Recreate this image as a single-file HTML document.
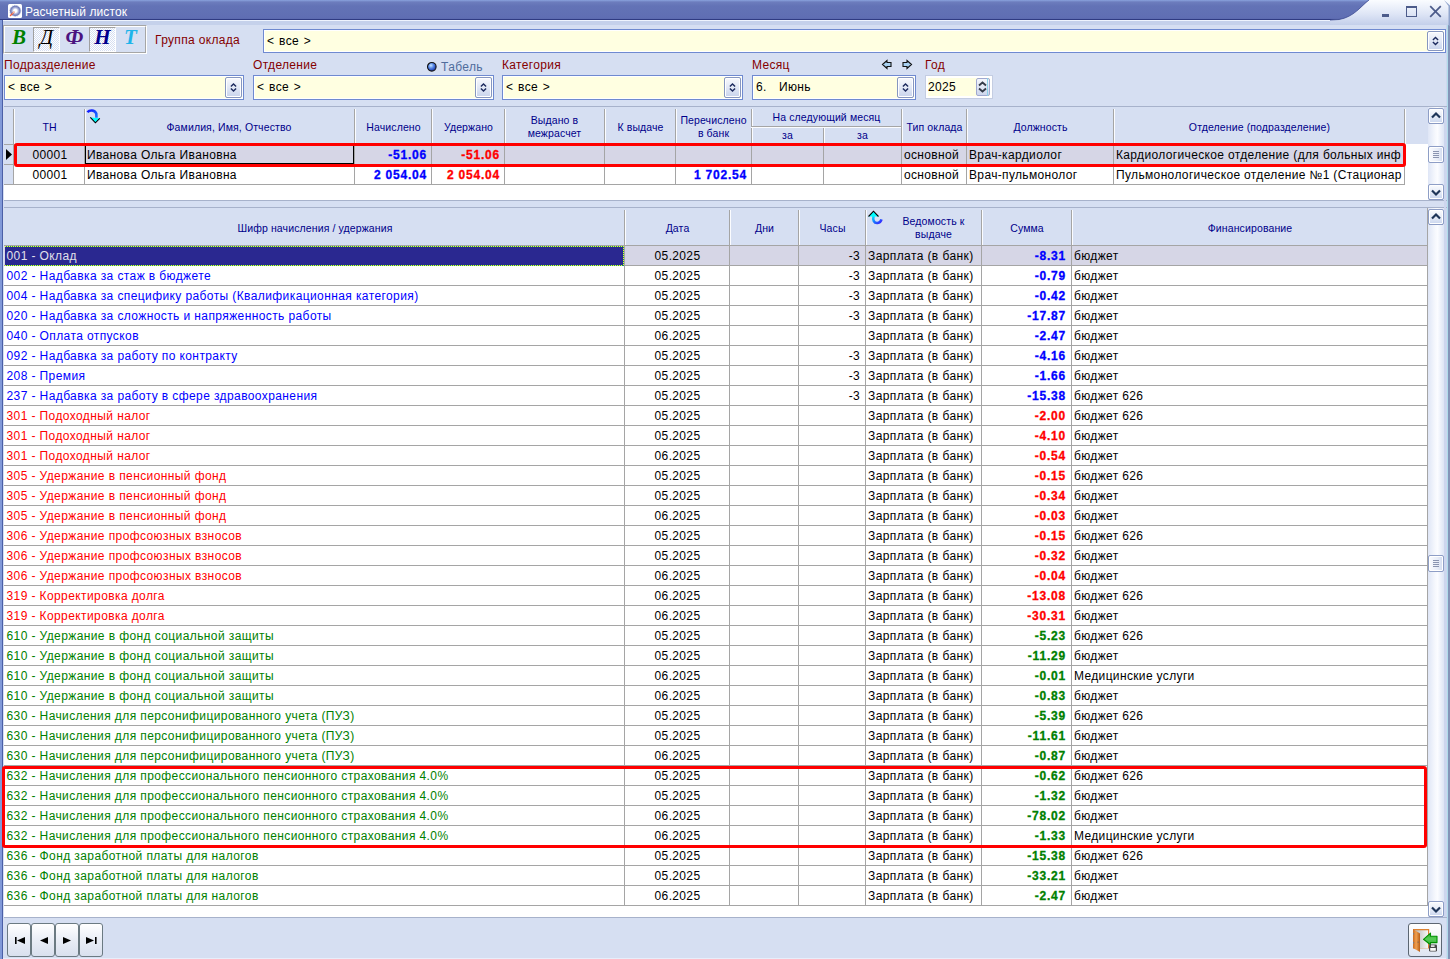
<!DOCTYPE html><html><head><meta charset="utf-8"><style>
*{margin:0;padding:0;box-sizing:border-box}
html,body{width:1450px;height:959px;overflow:hidden}
body{position:relative;background:#d6dff2;font-family:"Liberation Sans",sans-serif;font-size:12px;color:#000}
div,svg{position:absolute}
.t{white-space:nowrap;letter-spacing:0.35px;font-size:12px}
.c{white-space:nowrap;letter-spacing:0.35px;font-size:12px;height:19px;line-height:19px;overflow:hidden}
.n{font-weight:bold;letter-spacing:0.8px;-webkit-text-stroke:0.3px currentColor}
.hd{color:#00008a;font-size:10.5px;letter-spacing:0.12px;white-space:nowrap;text-align:center;line-height:13px}
.lbl{color:#850000;font-size:12px;letter-spacing:0.33px;white-space:nowrap;line-height:16px}
.combo{background:#ffffe1;border:1px solid #6f8ad0;box-shadow:inset 0 0 0 1px #fff}
.spin{background:linear-gradient(#f8f9fd,#e2e8f6 50%,#c8d3ec);border:1px solid #8696c0;border-radius:2px;box-shadow:inset 0 0 0 1px #fff}
.sb{background:linear-gradient(#fbfcfe,#e4eaf6 55%,#c9d5ee);border:1px solid #8e9ec6;border-radius:2px;box-shadow:inset 0 0 0 1px #fff}
.nav{background:linear-gradient(#ffffff,#e9edf6 50%,#d9e0ee);border:1px solid #6b7a82;border-radius:3px}
</style></head><body>

<div style="left:0;top:0;width:1450px;height:20px;background:linear-gradient(#8aa3de 0px,#6d7dbd 2px,#6373b6 6px,#5f6eb3 18px,#5a68ae 19px)"></div>
<div style="left:0px;top:19px;width:1450px;height:1px;background:#2f3b82"></div>
<div style="left:3px;top:20px;width:1443px;height:1px;background:#eef4fe"></div>
<div style="left:3px;top:21px;width:1443px;height:4px;background:#c5d1eb"></div>
<div style="left:3px;top:958px;width:1443px;height:1px;background:#e8eefa"></div>
<svg style="left:1330px;top:0" width="120" height="26"><defs><linearGradient id="tg" x1="0" y1="0" x2="0" y2="1"><stop offset="0" stop-color="#fafcff"/><stop offset="0.55" stop-color="#dfe6f6"/><stop offset="1" stop-color="#c3cfea"/></linearGradient></defs><path d="M39 0 C31 6 24 17 9 19.5 L0 20 L0 25 L120 25 L120 0 Z" fill="url(#tg)"/><path d="M39 0 C31 6 24 17 9 19.5 L0 20" stroke="#3a4890" stroke-width="0.8" fill="none"/></svg>
<div class="t" style="left:25px;top:4px;color:#fff;font-size:12px;letter-spacing:0.1px;line-height:16px">Расчетный листок</div>
<div style="left:8px;top:4px;width:14px;height:14px;background:#fff;border-radius:1.5px"></div>
<svg style="left:8px;top:4px" width="14" height="14"><defs><radialGradient id="ic" cx="0.5" cy="0.5" r="0.5"><stop offset="0.3" stop-color="#ffffff"/><stop offset="0.55" stop-color="#b4bade"/><stop offset="0.85" stop-color="#6e7ab8"/><stop offset="1" stop-color="#8a94c8"/></radialGradient></defs><circle cx="7.3" cy="6.8" r="5.4" fill="url(#ic)" stroke="#8a94c8" stroke-width="0.8" stroke-dasharray="1 0.8"/><path d="M2.5 11.5 L5.8 8.3" stroke="#f06040" stroke-width="1.5" stroke-linecap="round"/><path d="M4.5 9.5 L6.5 7.5" stroke="#f8c0a0" stroke-width="1"/></svg>
<div style="left:1382px;top:14px;width:7px;height:3px;background:#4c5b8a"></div>
<div style="left:1406px;top:6px;width:11px;height:11px;border:1px solid #4c5b8a;border-top:2px solid #4c5b8a"></div>
<svg style="left:1429px;top:5px" width="13" height="13"><path d="M1.2 1.2 L11.8 11.8 M11.8 1.2 L1.2 11.8" stroke="#4c5b8a" stroke-width="1.7"/></svg>
<div style="left:0px;top:20px;width:2px;height:939px;background:#8199d8"></div>
<div style="left:2px;top:20px;width:1px;height:939px;background:#4b5fa7"></div>
<div style="left:1446px;top:25px;width:4px;height:934px;background:linear-gradient(90deg,#ccd7ef 0,#ccd7ef 1.5px,#b0dcea 1.5px,#b0dcea 2.5px,#8494b8 2.5px)"></div>
<svg style="left:1444px;top:0" width="6" height="26"><path d="M0 0 L6 5.5 L6 26 L4.5 26 L4.5 6 Z" fill="#90a4cc"/></svg>
<div style="left:3px;top:25px;width:144px;height:29px;border:1px solid #a6a6a6;border-right-color:#fff;border-bottom-color:#fff"></div>
<div style="left:4px;top:26px;width:142px;height:27px;border:1px solid #fff;border-right-color:#a6a6a6;border-bottom-color:#a6a6a6;background:#d6dff2"></div>
<div style="left:5px;top:26px;width:28px;height:22px;color:#008000;font-family:'Liberation Serif',serif;font-style:italic;font-weight:bold;font-size:21px;line-height:22px;text-align:center">B</div>
<div style="left:33px;top:27px;width:27px;height:25px;background-color:#e4e9f5;background-image:repeating-conic-gradient(#ffffff 0 25%,#d6dff2 0 50%);background-size:2px 2px;border:1px solid #a0a0a0;border-right-color:#fff;border-bottom-color:#fff"></div>
<div style="left:33px;top:26px;width:27px;height:22px;color:#000;font-family:'Liberation Serif',serif;font-style:italic;font-weight:normal;font-size:21px;line-height:22px;text-align:center">Д</div>
<div style="left:60px;top:26px;width:29px;height:22px;color:#4b1480;font-family:'Liberation Serif',serif;font-style:italic;font-weight:bold;font-size:21px;line-height:22px;text-align:center">Ф</div>
<div style="left:89px;top:27px;width:27px;height:25px;background-color:#e4e9f5;background-image:repeating-conic-gradient(#ffffff 0 25%,#d6dff2 0 50%);background-size:2px 2px;border:1px solid #a0a0a0;border-right-color:#fff;border-bottom-color:#fff"></div>
<div style="left:89px;top:26px;width:27px;height:22px;color:#00008c;font-family:'Liberation Serif',serif;font-style:italic;font-weight:bold;font-size:21px;line-height:22px;text-align:center">Н</div>
<div style="left:116px;top:26px;width:29px;height:22px;color:#1eb4ea;font-family:'Liberation Serif',serif;font-style:italic;font-weight:bold;font-size:21px;line-height:22px;text-align:center">Т</div>
<div class="lbl" style="left:155px;top:32px">Группа оклада</div>
<div class="combo" style="left:263px;top:29px;width:1183px;height:24px;"></div>
<div class="t" style="left:267px;top:33px;line-height:16px;word-spacing:1px">&lt; все &gt;</div>
<div class="spin" style="left:1427px;top:31px;width:17px;height:20px;"></div><svg style="left:1427px;top:31px" width="17" height="20"><path d="M5.9 9.0 L8.5 6.4 L11.1 9.0 M5.9 11.0 L8.5 13.6 L11.1 11.0" stroke="#1c2a5e" stroke-width="1.4" fill="none"/></svg>
<div class="lbl" style="left:4px;top:57px">Подразделение</div>
<div class="lbl" style="left:253px;top:57px">Отделение</div>
<svg style="left:426px;top:60.5px" width="12" height="12"><defs><radialGradient id="rg" cx="0.4" cy="0.35" r="0.6"><stop offset="0" stop-color="#c8e8ff"/><stop offset="0.5" stop-color="#5a8ae8"/><stop offset="1" stop-color="#2040b0"/></radialGradient></defs><circle cx="5.8" cy="5.8" r="4.3" fill="url(#rg)" stroke="#111" stroke-width="1.1"/></svg>
<div class="t" style="left:441px;top:59px;line-height:16px;color:#4f6c9c">Табель</div>
<div class="lbl" style="left:502px;top:57px">Категория</div>
<div class="lbl" style="left:752px;top:57px">Месяц</div>
<svg style="left:881px;top:59px" width="32" height="12"><path d="M1.5 5.5 L6 1.5 L6 3.5 L10 3.5 L10 7.5 L6 7.5 L6 9.5 Z" fill="#a8d0f0" stroke="#111" stroke-width="1.1"/><path d="M30.5 5.5 L26 1.5 L26 3.5 L22 3.5 L22 7.5 L26 7.5 L26 9.5 Z" fill="#a8d0f0" stroke="#111" stroke-width="1.1"/></svg>
<div class="lbl" style="left:925px;top:57px">Год</div>
<div class="combo" style="left:4px;top:75px;width:240px;height:25px;"></div>
<div class="spin" style="left:225px;top:77px;width:17px;height:21px;"></div><svg style="left:225px;top:77px" width="17" height="21"><path d="M5.9 9.5 L8.5 6.9 L11.1 9.5 M5.9 11.5 L8.5 14.1 L11.1 11.5" stroke="#1c2a5e" stroke-width="1.4" fill="none"/></svg>
<div class="combo" style="left:253px;top:75px;width:241px;height:25px;"></div>
<div class="spin" style="left:475px;top:77px;width:17px;height:21px;"></div><svg style="left:475px;top:77px" width="17" height="21"><path d="M5.9 9.5 L8.5 6.9 L11.1 9.5 M5.9 11.5 L8.5 14.1 L11.1 11.5" stroke="#1c2a5e" stroke-width="1.4" fill="none"/></svg>
<div class="combo" style="left:502px;top:75px;width:241px;height:25px;"></div>
<div class="spin" style="left:724px;top:77px;width:17px;height:21px;"></div><svg style="left:724px;top:77px" width="17" height="21"><path d="M5.9 9.5 L8.5 6.9 L11.1 9.5 M5.9 11.5 L8.5 14.1 L11.1 11.5" stroke="#1c2a5e" stroke-width="1.4" fill="none"/></svg>
<div class="combo" style="left:752px;top:75px;width:164px;height:25px;"></div>
<div class="spin" style="left:897px;top:77px;width:17px;height:21px;"></div><svg style="left:897px;top:77px" width="17" height="21"><path d="M5.9 9.5 L8.5 6.9 L11.1 9.5 M5.9 11.5 L8.5 14.1 L11.1 11.5" stroke="#1c2a5e" stroke-width="1.4" fill="none"/></svg>
<div class="t" style="left:8px;top:79px;line-height:16px;word-spacing:1px">&lt; все &gt;</div>
<div class="t" style="left:257px;top:79px;line-height:16px;word-spacing:1px">&lt; все &gt;</div>
<div class="t" style="left:506px;top:79px;line-height:16px;word-spacing:1px">&lt; все &gt;</div>
<div class="t" style="left:756px;top:79px;line-height:16px">6.</div>
<div class="t" style="left:779px;top:79px;line-height:16px">Июнь</div>
<div style="left:925px;top:75px;width:68px;height:24px;background:#ffffe1;border:1px solid #c4cde2;box-shadow:inset 0 0 0 2px #fff"></div>
<div class="t" style="left:928px;top:79px;line-height:16px">2025</div>
<div style="left:976px;top:78px;width:14px;height:18px;background:linear-gradient(#f4f6fc,#cdd6ec);border:1px solid #a0a8d0;border-radius:2px"></div>
<div style="left:987px;top:78px;width:1px;height:18px;background:#8cd0e8"></div>
<svg style="left:976px;top:78px" width="13" height="18"><path d="M3 7.5 L6.5 4.5 L10 7.5 M3 10.5 L6.5 13.5 L10 10.5" stroke="#333a48" stroke-width="1.8" fill="none"/></svg>
<div style="left:4px;top:106px;width:1443px;height:1px;background:#a7b2cb"></div>
<div style="left:4px;top:107px;width:1424px;height:93px;background:#fff"></div>
<div style="left:4px;top:107px;width:1424px;height:37px;background:#d6dff2"></div>
<div style="left:4px;top:144px;width:1401px;height:1px;background:#a5a5a5"></div>
<div style="left:4px;top:145px;width:9px;height:39px;background:#d6dff2"></div>
<div style="left:14px;top:145px;width:1390px;height:19px;background:#d6d6e6"></div>
<div style="left:4px;top:164px;width:1401px;height:1px;background:#a5a5a5"></div>
<div style="left:4px;top:184px;width:1401px;height:1px;background:#a5a5a5"></div>
<div style="left:13px;top:109px;width:1px;height:76px;background:#a5a5a5"></div>
<div style="left:14px;top:109px;width:1px;height:35px;background:#fbfcff"></div>
<div style="left:84px;top:109px;width:1px;height:76px;background:#a5a5a5"></div>
<div style="left:85px;top:109px;width:1px;height:35px;background:#fbfcff"></div>
<div style="left:354px;top:109px;width:1px;height:76px;background:#a5a5a5"></div>
<div style="left:355px;top:109px;width:1px;height:35px;background:#fbfcff"></div>
<div style="left:431px;top:109px;width:1px;height:76px;background:#a5a5a5"></div>
<div style="left:432px;top:109px;width:1px;height:35px;background:#fbfcff"></div>
<div style="left:504px;top:109px;width:1px;height:76px;background:#a5a5a5"></div>
<div style="left:505px;top:109px;width:1px;height:35px;background:#fbfcff"></div>
<div style="left:604px;top:109px;width:1px;height:76px;background:#a5a5a5"></div>
<div style="left:605px;top:109px;width:1px;height:35px;background:#fbfcff"></div>
<div style="left:675px;top:109px;width:1px;height:76px;background:#a5a5a5"></div>
<div style="left:676px;top:109px;width:1px;height:35px;background:#fbfcff"></div>
<div style="left:751px;top:109px;width:1px;height:76px;background:#a5a5a5"></div>
<div style="left:752px;top:109px;width:1px;height:35px;background:#fbfcff"></div>
<div style="left:823px;top:127px;width:1px;height:58px;background:#a5a5a5"></div>
<div style="left:824px;top:127px;width:1px;height:17px;background:#fbfcff"></div>
<div style="left:901px;top:109px;width:1px;height:76px;background:#a5a5a5"></div>
<div style="left:902px;top:109px;width:1px;height:35px;background:#fbfcff"></div>
<div style="left:966px;top:109px;width:1px;height:76px;background:#a5a5a5"></div>
<div style="left:967px;top:109px;width:1px;height:35px;background:#fbfcff"></div>
<div style="left:1113px;top:109px;width:1px;height:76px;background:#a5a5a5"></div>
<div style="left:1114px;top:109px;width:1px;height:35px;background:#fbfcff"></div>
<div style="left:1404px;top:109px;width:1px;height:76px;background:#a5a5a5"></div>
<div style="left:1405px;top:109px;width:1px;height:35px;background:#fbfcff"></div>
<div style="left:751px;top:126px;width:150px;height:1px;background:#a5a5a5"></div>
<div style="left:751px;top:127px;width:150px;height:1px;background:#fbfcff"></div>
<div class="hd" style="left:14px;top:121px;width:71px">ТН</div>
<div class="hd" style="left:103px;top:121px;width:252px">Фамилия, Имя, Отчество</div>
<div class="hd" style="left:355px;top:121px;width:77px">Начислено</div>
<div class="hd" style="left:432px;top:121px;width:73px">Удержано</div>
<div class="hd" style="left:605px;top:121px;width:71px">К выдаче</div>
<div class="hd" style="left:902px;top:121px;width:65px">Тип оклада</div>
<div class="hd" style="left:967px;top:121px;width:147px">Должность</div>
<div class="hd" style="left:1114px;top:121px;width:291px">Отделение (подразделение)</div>
<div class="hd" style="left:505px;top:114px;width:99px;line-height:13px">Выдано в<br>межрасчет</div>
<div class="hd" style="left:676px;top:114px;width:75px;line-height:13px">Перечислено<br>в банк</div>
<div class="hd" style="left:752px;top:111px;width:149px">На следующий месяц</div>
<div class="hd" style="left:752px;top:129px;width:71px">за</div>
<div class="hd" style="left:824px;top:129px;width:77px">за</div>
<svg style="left:80px;top:104px" width="24" height="24"><defs><linearGradient id="s1" x1="0" y1="0" x2="1" y2="1"><stop offset="0" stop-color="#1414ff"/><stop offset="1" stop-color="#1a7aff"/></linearGradient></defs><path d="M7.5 8.3 C9.5 5.8 14.5 5.5 16.3 9.5 L16.5 13.8" stroke="url(#s1)" stroke-width="2.6" fill="none"/><path d="M10.3 13.4 L19.8 14.3 L15.4 18.8 Z" fill="#00ffff"/><path d="M10.3 13.4 L15.4 18.8 L19.8 14.3" stroke="#000" stroke-width="1.1" fill="none"/></svg>
<svg style="left:5px;top:148px" width="9" height="14"><path d="M1 1 L7 6.5 L1 12 Z" fill="#000"/></svg>
<div style="left:85px;top:145px;width:269px;height:19px;border:1px solid #000;border-top:none"></div>
<div class="c" style="left:14px;top:146px;width:70px;text-align:center;;padding-left:2px">00001</div>
<div class="c" style="left:85px;top:146px;width:269px;text-align:left;padding-left:3px;padding-left:2px">Иванова Ольга Ивановна</div>
<div class="c n" style="left:355px;top:146px;width:76px;text-align:right;padding-right:5px;color:#0000ff;padding-right:4px">-51.06</div>
<div class="c n" style="left:432px;top:146px;width:72px;text-align:right;padding-right:5px;color:#ff0000;padding-right:4px">-51.06</div>
<div class="c n" style="left:676px;top:146px;width:75px;text-align:right;padding-right:5px;color:#0000ff;padding-right:4px"></div>
<div class="c" style="left:902px;top:146px;width:64px;text-align:left;padding-left:3px;padding-left:2px">основной</div>
<div class="c" style="left:967px;top:146px;width:146px;text-align:left;padding-left:3px;padding-left:2px">Врач-кардиолог</div>
<div class="c" style="left:1114px;top:146px;width:290px;text-align:left;padding-left:3px;padding-left:2px">Кардиологическое отделение (для больных инф</div>
<div class="c" style="left:14px;top:166px;width:70px;text-align:center;;padding-left:2px">00001</div>
<div class="c" style="left:85px;top:166px;width:269px;text-align:left;padding-left:3px;padding-left:2px">Иванова Ольга Ивановна</div>
<div class="c n" style="left:355px;top:166px;width:76px;text-align:right;padding-right:5px;color:#0000ff;padding-right:4px">2 054.04</div>
<div class="c n" style="left:432px;top:166px;width:72px;text-align:right;padding-right:5px;color:#ff0000;padding-right:4px">2 054.04</div>
<div class="c n" style="left:676px;top:166px;width:75px;text-align:right;padding-right:5px;color:#0000ff;padding-right:4px">1 702.54</div>
<div class="c" style="left:902px;top:166px;width:64px;text-align:left;padding-left:3px;padding-left:2px">основной</div>
<div class="c" style="left:967px;top:166px;width:146px;text-align:left;padding-left:3px;padding-left:2px">Врач-пульмонолог</div>
<div class="c" style="left:1114px;top:166px;width:290px;text-align:left;padding-left:3px;padding-left:2px">Пульмонологическое отделение №1 (Стационар</div>
<div style="left:4px;top:200px;width:1443px;height:1px;background:#a7b2cb"></div>
<div style="left:1428px;top:107px;width:16px;height:93px;background:linear-gradient(90deg,#dfe6f6,#f6f8fd 45%,#fbfcff 60%,#dde5f5)"></div>
<div class="sb" style="left:1428px;top:108px;width:16px;height:16px;"></div><svg style="left:1428px;top:108px" width="16" height="16"><path d="M4 9.5 L8 5.5 L12 9.5" stroke="#1e3558" stroke-width="2.2" fill="none"/></svg><div style="left:1429px;top:123px;width:14px;height:1px;background:#8a9ac4"></div>
<div style="left:1428px;top:146px;width:16px;height:17px;background:linear-gradient(90deg,#fafbfe,#e8edf8 60%,#d2dbef);border:1px solid #8e9ec6;border-radius:2px;box-shadow:inset 0 0 0 1px #fff"></div><svg style="left:1428px;top:146px" width="16" height="17"><path d="M5 5.5 H11 M5 7.5 H11 M5 9.5 H11 M5 11.5 H11" stroke="#8a94b0" stroke-width="1"/></svg>
<div class="sb" style="left:1428px;top:184px;width:16px;height:16px;"></div><svg style="left:1428px;top:184px" width="16" height="16"><path d="M4 6.5 L8 10.5 L12 6.5" stroke="#1e3558" stroke-width="2.2" fill="none"/></svg><div style="left:1429px;top:199px;width:14px;height:1px;background:#8a9ac4"></div>
<div style="left:4px;top:207px;width:1443px;height:1px;background:#a7b2cb"></div>
<div style="left:4px;top:208px;width:1424px;height:709px;background:#fff"></div>
<div style="left:4px;top:208px;width:1424px;height:37px;background:#d6dff2"></div>
<div style="left:4px;top:245px;width:1424px;height:1px;background:#a5a5a5"></div>
<div style="left:624px;top:210px;width:1px;height:35px;background:#a5a5a5"></div>
<div style="left:625px;top:210px;width:1px;height:35px;background:#fbfcff"></div>
<div style="left:729px;top:210px;width:1px;height:35px;background:#a5a5a5"></div>
<div style="left:730px;top:210px;width:1px;height:35px;background:#fbfcff"></div>
<div style="left:798px;top:210px;width:1px;height:35px;background:#a5a5a5"></div>
<div style="left:799px;top:210px;width:1px;height:35px;background:#fbfcff"></div>
<div style="left:865px;top:210px;width:1px;height:35px;background:#a5a5a5"></div>
<div style="left:866px;top:210px;width:1px;height:35px;background:#fbfcff"></div>
<div style="left:981px;top:210px;width:1px;height:35px;background:#a5a5a5"></div>
<div style="left:982px;top:210px;width:1px;height:35px;background:#fbfcff"></div>
<div style="left:1071px;top:210px;width:1px;height:35px;background:#a5a5a5"></div>
<div style="left:1072px;top:210px;width:1px;height:35px;background:#fbfcff"></div>
<div class="hd" style="left:5px;top:222px;width:620px">Шифр начисления / удержания</div>
<div class="hd" style="left:625px;top:222px;width:105px">Дата</div>
<div class="hd" style="left:730px;top:222px;width:69px">Дни</div>
<div class="hd" style="left:799px;top:222px;width:67px">Часы</div>
<div class="hd" style="left:982px;top:222px;width:90px">Сумма</div>
<div class="hd" style="left:1072px;top:222px;width:356px">Финансирование</div>
<div class="hd" style="left:886px;top:215px;width:95px">Ведомость к<br>выдаче</div>
<svg style="left:862px;top:206px" width="24" height="24"><defs><linearGradient id="s2" x1="0" y1="0" x2="1" y2="1"><stop offset="0" stop-color="#00e8ff"/><stop offset="0.5" stop-color="#1a70ff"/><stop offset="1" stop-color="#3a20ff"/></linearGradient></defs><path d="M11.5 10 C10.5 14 12 17.3 15.5 17 C17.5 16.7 19 15 19.5 13.3" stroke="url(#s2)" stroke-width="2.6" fill="none"/><path d="M6.5 10.5 L11.5 5.2 L16.5 10.5 Z" fill="#00ffff"/><path d="M6.5 10.5 L11.5 5.2 L16.5 10.5" stroke="#000" stroke-width="1.1" fill="none"/></svg>
<div style="left:4px;top:246px;width:1423px;height:19px;background:#d6d6e6"></div>
<div style="left:4px;top:265px;width:1423px;height:1px;background:#a5a5a5"></div>
<div class="c" style="left:5px;top:247px;width:619px;text-align:left;padding-left:3px;color:#e4e4f0;padding-left:1.5px;letter-spacing:0.4px">001 - Оклад</div>
<div class="c" style="left:625px;top:247px;width:104px;text-align:center;;padding-left:1px">05.2025</div>
<div class="c" style="left:799px;top:247px;width:66px;text-align:right;padding-right:5px;padding-right:5px">-3</div>
<div class="c" style="left:866px;top:247px;width:115px;text-align:left;padding-left:3px;padding-left:2px;letter-spacing:0.4px">Зарплата (в банк)</div>
<div class="c n" style="left:982px;top:247px;width:89px;text-align:right;padding-right:5px;color:#0000ff;padding-right:5px">-8.31</div>
<div class="c" style="left:1072px;top:247px;width:355px;text-align:left;padding-left:3px;padding-left:2px">бюджет</div>
<div style="left:4px;top:285px;width:1423px;height:1px;background:#a5a5a5"></div>
<div class="c" style="left:5px;top:267px;width:619px;text-align:left;padding-left:3px;color:#0000ff;padding-left:1.5px;letter-spacing:0.4px">002 - Надбавка за стаж в бюджете</div>
<div class="c" style="left:625px;top:267px;width:104px;text-align:center;;padding-left:1px">05.2025</div>
<div class="c" style="left:799px;top:267px;width:66px;text-align:right;padding-right:5px;padding-right:5px">-3</div>
<div class="c" style="left:866px;top:267px;width:115px;text-align:left;padding-left:3px;padding-left:2px;letter-spacing:0.4px">Зарплата (в банк)</div>
<div class="c n" style="left:982px;top:267px;width:89px;text-align:right;padding-right:5px;color:#0000ff;padding-right:5px">-0.79</div>
<div class="c" style="left:1072px;top:267px;width:355px;text-align:left;padding-left:3px;padding-left:2px">бюджет</div>
<div style="left:4px;top:305px;width:1423px;height:1px;background:#a5a5a5"></div>
<div class="c" style="left:5px;top:287px;width:619px;text-align:left;padding-left:3px;color:#0000ff;padding-left:1.5px;letter-spacing:0.4px">004 - Надбавка за специфику работы (Квалификационная категория)</div>
<div class="c" style="left:625px;top:287px;width:104px;text-align:center;;padding-left:1px">05.2025</div>
<div class="c" style="left:799px;top:287px;width:66px;text-align:right;padding-right:5px;padding-right:5px">-3</div>
<div class="c" style="left:866px;top:287px;width:115px;text-align:left;padding-left:3px;padding-left:2px;letter-spacing:0.4px">Зарплата (в банк)</div>
<div class="c n" style="left:982px;top:287px;width:89px;text-align:right;padding-right:5px;color:#0000ff;padding-right:5px">-0.42</div>
<div class="c" style="left:1072px;top:287px;width:355px;text-align:left;padding-left:3px;padding-left:2px">бюджет</div>
<div style="left:4px;top:325px;width:1423px;height:1px;background:#a5a5a5"></div>
<div class="c" style="left:5px;top:307px;width:619px;text-align:left;padding-left:3px;color:#0000ff;padding-left:1.5px;letter-spacing:0.4px">020 - Надбавка за сложность и напряженность работы</div>
<div class="c" style="left:625px;top:307px;width:104px;text-align:center;;padding-left:1px">05.2025</div>
<div class="c" style="left:799px;top:307px;width:66px;text-align:right;padding-right:5px;padding-right:5px">-3</div>
<div class="c" style="left:866px;top:307px;width:115px;text-align:left;padding-left:3px;padding-left:2px;letter-spacing:0.4px">Зарплата (в банк)</div>
<div class="c n" style="left:982px;top:307px;width:89px;text-align:right;padding-right:5px;color:#0000ff;padding-right:5px">-17.87</div>
<div class="c" style="left:1072px;top:307px;width:355px;text-align:left;padding-left:3px;padding-left:2px">бюджет</div>
<div style="left:4px;top:345px;width:1423px;height:1px;background:#a5a5a5"></div>
<div class="c" style="left:5px;top:327px;width:619px;text-align:left;padding-left:3px;color:#0000ff;padding-left:1.5px;letter-spacing:0.4px">040 - Оплата отпусков</div>
<div class="c" style="left:625px;top:327px;width:104px;text-align:center;;padding-left:1px">06.2025</div>
<div class="c" style="left:799px;top:327px;width:66px;text-align:right;padding-right:5px;padding-right:5px"></div>
<div class="c" style="left:866px;top:327px;width:115px;text-align:left;padding-left:3px;padding-left:2px;letter-spacing:0.4px">Зарплата (в банк)</div>
<div class="c n" style="left:982px;top:327px;width:89px;text-align:right;padding-right:5px;color:#0000ff;padding-right:5px">-2.47</div>
<div class="c" style="left:1072px;top:327px;width:355px;text-align:left;padding-left:3px;padding-left:2px">бюджет</div>
<div style="left:4px;top:365px;width:1423px;height:1px;background:#a5a5a5"></div>
<div class="c" style="left:5px;top:347px;width:619px;text-align:left;padding-left:3px;color:#0000ff;padding-left:1.5px;letter-spacing:0.4px">092 - Надбавка за работу по контракту</div>
<div class="c" style="left:625px;top:347px;width:104px;text-align:center;;padding-left:1px">05.2025</div>
<div class="c" style="left:799px;top:347px;width:66px;text-align:right;padding-right:5px;padding-right:5px">-3</div>
<div class="c" style="left:866px;top:347px;width:115px;text-align:left;padding-left:3px;padding-left:2px;letter-spacing:0.4px">Зарплата (в банк)</div>
<div class="c n" style="left:982px;top:347px;width:89px;text-align:right;padding-right:5px;color:#0000ff;padding-right:5px">-4.16</div>
<div class="c" style="left:1072px;top:347px;width:355px;text-align:left;padding-left:3px;padding-left:2px">бюджет</div>
<div style="left:4px;top:385px;width:1423px;height:1px;background:#a5a5a5"></div>
<div class="c" style="left:5px;top:367px;width:619px;text-align:left;padding-left:3px;color:#0000ff;padding-left:1.5px;letter-spacing:0.4px">208 - Премия</div>
<div class="c" style="left:625px;top:367px;width:104px;text-align:center;;padding-left:1px">05.2025</div>
<div class="c" style="left:799px;top:367px;width:66px;text-align:right;padding-right:5px;padding-right:5px">-3</div>
<div class="c" style="left:866px;top:367px;width:115px;text-align:left;padding-left:3px;padding-left:2px;letter-spacing:0.4px">Зарплата (в банк)</div>
<div class="c n" style="left:982px;top:367px;width:89px;text-align:right;padding-right:5px;color:#0000ff;padding-right:5px">-1.66</div>
<div class="c" style="left:1072px;top:367px;width:355px;text-align:left;padding-left:3px;padding-left:2px">бюджет</div>
<div style="left:4px;top:405px;width:1423px;height:1px;background:#a5a5a5"></div>
<div class="c" style="left:5px;top:387px;width:619px;text-align:left;padding-left:3px;color:#0000ff;padding-left:1.5px;letter-spacing:0.4px">237 - Надбавка за работу в сфере здравоохранения</div>
<div class="c" style="left:625px;top:387px;width:104px;text-align:center;;padding-left:1px">05.2025</div>
<div class="c" style="left:799px;top:387px;width:66px;text-align:right;padding-right:5px;padding-right:5px">-3</div>
<div class="c" style="left:866px;top:387px;width:115px;text-align:left;padding-left:3px;padding-left:2px;letter-spacing:0.4px">Зарплата (в банк)</div>
<div class="c n" style="left:982px;top:387px;width:89px;text-align:right;padding-right:5px;color:#0000ff;padding-right:5px">-15.38</div>
<div class="c" style="left:1072px;top:387px;width:355px;text-align:left;padding-left:3px;padding-left:2px">бюджет 626</div>
<div style="left:4px;top:425px;width:1423px;height:1px;background:#a5a5a5"></div>
<div class="c" style="left:5px;top:407px;width:619px;text-align:left;padding-left:3px;color:#ff0000;padding-left:1.5px;letter-spacing:0.4px">301 - Подоходный налог</div>
<div class="c" style="left:625px;top:407px;width:104px;text-align:center;;padding-left:1px">05.2025</div>
<div class="c" style="left:799px;top:407px;width:66px;text-align:right;padding-right:5px;padding-right:5px"></div>
<div class="c" style="left:866px;top:407px;width:115px;text-align:left;padding-left:3px;padding-left:2px;letter-spacing:0.4px">Зарплата (в банк)</div>
<div class="c n" style="left:982px;top:407px;width:89px;text-align:right;padding-right:5px;color:#ff0000;padding-right:5px">-2.00</div>
<div class="c" style="left:1072px;top:407px;width:355px;text-align:left;padding-left:3px;padding-left:2px">бюджет 626</div>
<div style="left:4px;top:445px;width:1423px;height:1px;background:#a5a5a5"></div>
<div class="c" style="left:5px;top:427px;width:619px;text-align:left;padding-left:3px;color:#ff0000;padding-left:1.5px;letter-spacing:0.4px">301 - Подоходный налог</div>
<div class="c" style="left:625px;top:427px;width:104px;text-align:center;;padding-left:1px">05.2025</div>
<div class="c" style="left:799px;top:427px;width:66px;text-align:right;padding-right:5px;padding-right:5px"></div>
<div class="c" style="left:866px;top:427px;width:115px;text-align:left;padding-left:3px;padding-left:2px;letter-spacing:0.4px">Зарплата (в банк)</div>
<div class="c n" style="left:982px;top:427px;width:89px;text-align:right;padding-right:5px;color:#ff0000;padding-right:5px">-4.10</div>
<div class="c" style="left:1072px;top:427px;width:355px;text-align:left;padding-left:3px;padding-left:2px">бюджет</div>
<div style="left:4px;top:465px;width:1423px;height:1px;background:#a5a5a5"></div>
<div class="c" style="left:5px;top:447px;width:619px;text-align:left;padding-left:3px;color:#ff0000;padding-left:1.5px;letter-spacing:0.4px">301 - Подоходный налог</div>
<div class="c" style="left:625px;top:447px;width:104px;text-align:center;;padding-left:1px">06.2025</div>
<div class="c" style="left:799px;top:447px;width:66px;text-align:right;padding-right:5px;padding-right:5px"></div>
<div class="c" style="left:866px;top:447px;width:115px;text-align:left;padding-left:3px;padding-left:2px;letter-spacing:0.4px">Зарплата (в банк)</div>
<div class="c n" style="left:982px;top:447px;width:89px;text-align:right;padding-right:5px;color:#ff0000;padding-right:5px">-0.54</div>
<div class="c" style="left:1072px;top:447px;width:355px;text-align:left;padding-left:3px;padding-left:2px">бюджет</div>
<div style="left:4px;top:485px;width:1423px;height:1px;background:#a5a5a5"></div>
<div class="c" style="left:5px;top:467px;width:619px;text-align:left;padding-left:3px;color:#ff0000;padding-left:1.5px;letter-spacing:0.4px">305 - Удержание в пенсионный фонд</div>
<div class="c" style="left:625px;top:467px;width:104px;text-align:center;;padding-left:1px">05.2025</div>
<div class="c" style="left:799px;top:467px;width:66px;text-align:right;padding-right:5px;padding-right:5px"></div>
<div class="c" style="left:866px;top:467px;width:115px;text-align:left;padding-left:3px;padding-left:2px;letter-spacing:0.4px">Зарплата (в банк)</div>
<div class="c n" style="left:982px;top:467px;width:89px;text-align:right;padding-right:5px;color:#ff0000;padding-right:5px">-0.15</div>
<div class="c" style="left:1072px;top:467px;width:355px;text-align:left;padding-left:3px;padding-left:2px">бюджет 626</div>
<div style="left:4px;top:505px;width:1423px;height:1px;background:#a5a5a5"></div>
<div class="c" style="left:5px;top:487px;width:619px;text-align:left;padding-left:3px;color:#ff0000;padding-left:1.5px;letter-spacing:0.4px">305 - Удержание в пенсионный фонд</div>
<div class="c" style="left:625px;top:487px;width:104px;text-align:center;;padding-left:1px">05.2025</div>
<div class="c" style="left:799px;top:487px;width:66px;text-align:right;padding-right:5px;padding-right:5px"></div>
<div class="c" style="left:866px;top:487px;width:115px;text-align:left;padding-left:3px;padding-left:2px;letter-spacing:0.4px">Зарплата (в банк)</div>
<div class="c n" style="left:982px;top:487px;width:89px;text-align:right;padding-right:5px;color:#ff0000;padding-right:5px">-0.34</div>
<div class="c" style="left:1072px;top:487px;width:355px;text-align:left;padding-left:3px;padding-left:2px">бюджет</div>
<div style="left:4px;top:525px;width:1423px;height:1px;background:#a5a5a5"></div>
<div class="c" style="left:5px;top:507px;width:619px;text-align:left;padding-left:3px;color:#ff0000;padding-left:1.5px;letter-spacing:0.4px">305 - Удержание в пенсионный фонд</div>
<div class="c" style="left:625px;top:507px;width:104px;text-align:center;;padding-left:1px">06.2025</div>
<div class="c" style="left:799px;top:507px;width:66px;text-align:right;padding-right:5px;padding-right:5px"></div>
<div class="c" style="left:866px;top:507px;width:115px;text-align:left;padding-left:3px;padding-left:2px;letter-spacing:0.4px">Зарплата (в банк)</div>
<div class="c n" style="left:982px;top:507px;width:89px;text-align:right;padding-right:5px;color:#ff0000;padding-right:5px">-0.03</div>
<div class="c" style="left:1072px;top:507px;width:355px;text-align:left;padding-left:3px;padding-left:2px">бюджет</div>
<div style="left:4px;top:545px;width:1423px;height:1px;background:#a5a5a5"></div>
<div class="c" style="left:5px;top:527px;width:619px;text-align:left;padding-left:3px;color:#ff0000;padding-left:1.5px;letter-spacing:0.4px">306 - Удержание профсоюзных взносов</div>
<div class="c" style="left:625px;top:527px;width:104px;text-align:center;;padding-left:1px">05.2025</div>
<div class="c" style="left:799px;top:527px;width:66px;text-align:right;padding-right:5px;padding-right:5px"></div>
<div class="c" style="left:866px;top:527px;width:115px;text-align:left;padding-left:3px;padding-left:2px;letter-spacing:0.4px">Зарплата (в банк)</div>
<div class="c n" style="left:982px;top:527px;width:89px;text-align:right;padding-right:5px;color:#ff0000;padding-right:5px">-0.15</div>
<div class="c" style="left:1072px;top:527px;width:355px;text-align:left;padding-left:3px;padding-left:2px">бюджет 626</div>
<div style="left:4px;top:565px;width:1423px;height:1px;background:#a5a5a5"></div>
<div class="c" style="left:5px;top:547px;width:619px;text-align:left;padding-left:3px;color:#ff0000;padding-left:1.5px;letter-spacing:0.4px">306 - Удержание профсоюзных взносов</div>
<div class="c" style="left:625px;top:547px;width:104px;text-align:center;;padding-left:1px">05.2025</div>
<div class="c" style="left:799px;top:547px;width:66px;text-align:right;padding-right:5px;padding-right:5px"></div>
<div class="c" style="left:866px;top:547px;width:115px;text-align:left;padding-left:3px;padding-left:2px;letter-spacing:0.4px">Зарплата (в банк)</div>
<div class="c n" style="left:982px;top:547px;width:89px;text-align:right;padding-right:5px;color:#ff0000;padding-right:5px">-0.32</div>
<div class="c" style="left:1072px;top:547px;width:355px;text-align:left;padding-left:3px;padding-left:2px">бюджет</div>
<div style="left:4px;top:585px;width:1423px;height:1px;background:#a5a5a5"></div>
<div class="c" style="left:5px;top:567px;width:619px;text-align:left;padding-left:3px;color:#ff0000;padding-left:1.5px;letter-spacing:0.4px">306 - Удержание профсоюзных взносов</div>
<div class="c" style="left:625px;top:567px;width:104px;text-align:center;;padding-left:1px">06.2025</div>
<div class="c" style="left:799px;top:567px;width:66px;text-align:right;padding-right:5px;padding-right:5px"></div>
<div class="c" style="left:866px;top:567px;width:115px;text-align:left;padding-left:3px;padding-left:2px;letter-spacing:0.4px">Зарплата (в банк)</div>
<div class="c n" style="left:982px;top:567px;width:89px;text-align:right;padding-right:5px;color:#ff0000;padding-right:5px">-0.04</div>
<div class="c" style="left:1072px;top:567px;width:355px;text-align:left;padding-left:3px;padding-left:2px">бюджет</div>
<div style="left:4px;top:605px;width:1423px;height:1px;background:#a5a5a5"></div>
<div class="c" style="left:5px;top:587px;width:619px;text-align:left;padding-left:3px;color:#ff0000;padding-left:1.5px;letter-spacing:0.4px">319 - Корректировка долга</div>
<div class="c" style="left:625px;top:587px;width:104px;text-align:center;;padding-left:1px">06.2025</div>
<div class="c" style="left:799px;top:587px;width:66px;text-align:right;padding-right:5px;padding-right:5px"></div>
<div class="c" style="left:866px;top:587px;width:115px;text-align:left;padding-left:3px;padding-left:2px;letter-spacing:0.4px">Зарплата (в банк)</div>
<div class="c n" style="left:982px;top:587px;width:89px;text-align:right;padding-right:5px;color:#ff0000;padding-right:5px">-13.08</div>
<div class="c" style="left:1072px;top:587px;width:355px;text-align:left;padding-left:3px;padding-left:2px">бюджет 626</div>
<div style="left:4px;top:625px;width:1423px;height:1px;background:#a5a5a5"></div>
<div class="c" style="left:5px;top:607px;width:619px;text-align:left;padding-left:3px;color:#ff0000;padding-left:1.5px;letter-spacing:0.4px">319 - Корректировка долга</div>
<div class="c" style="left:625px;top:607px;width:104px;text-align:center;;padding-left:1px">06.2025</div>
<div class="c" style="left:799px;top:607px;width:66px;text-align:right;padding-right:5px;padding-right:5px"></div>
<div class="c" style="left:866px;top:607px;width:115px;text-align:left;padding-left:3px;padding-left:2px;letter-spacing:0.4px">Зарплата (в банк)</div>
<div class="c n" style="left:982px;top:607px;width:89px;text-align:right;padding-right:5px;color:#ff0000;padding-right:5px">-30.31</div>
<div class="c" style="left:1072px;top:607px;width:355px;text-align:left;padding-left:3px;padding-left:2px">бюджет</div>
<div style="left:4px;top:645px;width:1423px;height:1px;background:#a5a5a5"></div>
<div class="c" style="left:5px;top:627px;width:619px;text-align:left;padding-left:3px;color:#008000;padding-left:1.5px;letter-spacing:0.4px">610 - Удержание в фонд социальной защиты</div>
<div class="c" style="left:625px;top:627px;width:104px;text-align:center;;padding-left:1px">05.2025</div>
<div class="c" style="left:799px;top:627px;width:66px;text-align:right;padding-right:5px;padding-right:5px"></div>
<div class="c" style="left:866px;top:627px;width:115px;text-align:left;padding-left:3px;padding-left:2px;letter-spacing:0.4px">Зарплата (в банк)</div>
<div class="c n" style="left:982px;top:627px;width:89px;text-align:right;padding-right:5px;color:#008000;padding-right:5px">-5.23</div>
<div class="c" style="left:1072px;top:627px;width:355px;text-align:left;padding-left:3px;padding-left:2px">бюджет 626</div>
<div style="left:4px;top:665px;width:1423px;height:1px;background:#a5a5a5"></div>
<div class="c" style="left:5px;top:647px;width:619px;text-align:left;padding-left:3px;color:#008000;padding-left:1.5px;letter-spacing:0.4px">610 - Удержание в фонд социальной защиты</div>
<div class="c" style="left:625px;top:647px;width:104px;text-align:center;;padding-left:1px">05.2025</div>
<div class="c" style="left:799px;top:647px;width:66px;text-align:right;padding-right:5px;padding-right:5px"></div>
<div class="c" style="left:866px;top:647px;width:115px;text-align:left;padding-left:3px;padding-left:2px;letter-spacing:0.4px">Зарплата (в банк)</div>
<div class="c n" style="left:982px;top:647px;width:89px;text-align:right;padding-right:5px;color:#008000;padding-right:5px">-11.29</div>
<div class="c" style="left:1072px;top:647px;width:355px;text-align:left;padding-left:3px;padding-left:2px">бюджет</div>
<div style="left:4px;top:685px;width:1423px;height:1px;background:#a5a5a5"></div>
<div class="c" style="left:5px;top:667px;width:619px;text-align:left;padding-left:3px;color:#008000;padding-left:1.5px;letter-spacing:0.4px">610 - Удержание в фонд социальной защиты</div>
<div class="c" style="left:625px;top:667px;width:104px;text-align:center;;padding-left:1px">06.2025</div>
<div class="c" style="left:799px;top:667px;width:66px;text-align:right;padding-right:5px;padding-right:5px"></div>
<div class="c" style="left:866px;top:667px;width:115px;text-align:left;padding-left:3px;padding-left:2px;letter-spacing:0.4px">Зарплата (в банк)</div>
<div class="c n" style="left:982px;top:667px;width:89px;text-align:right;padding-right:5px;color:#008000;padding-right:5px">-0.01</div>
<div class="c" style="left:1072px;top:667px;width:355px;text-align:left;padding-left:3px;padding-left:2px">Медицинские услуги</div>
<div style="left:4px;top:705px;width:1423px;height:1px;background:#a5a5a5"></div>
<div class="c" style="left:5px;top:687px;width:619px;text-align:left;padding-left:3px;color:#008000;padding-left:1.5px;letter-spacing:0.4px">610 - Удержание в фонд социальной защиты</div>
<div class="c" style="left:625px;top:687px;width:104px;text-align:center;;padding-left:1px">06.2025</div>
<div class="c" style="left:799px;top:687px;width:66px;text-align:right;padding-right:5px;padding-right:5px"></div>
<div class="c" style="left:866px;top:687px;width:115px;text-align:left;padding-left:3px;padding-left:2px;letter-spacing:0.4px">Зарплата (в банк)</div>
<div class="c n" style="left:982px;top:687px;width:89px;text-align:right;padding-right:5px;color:#008000;padding-right:5px">-0.83</div>
<div class="c" style="left:1072px;top:687px;width:355px;text-align:left;padding-left:3px;padding-left:2px">бюджет</div>
<div style="left:4px;top:725px;width:1423px;height:1px;background:#a5a5a5"></div>
<div class="c" style="left:5px;top:707px;width:619px;text-align:left;padding-left:3px;color:#008000;padding-left:1.5px;letter-spacing:0.4px">630 - Начисления для персонифицированного учета (ПУЗ)</div>
<div class="c" style="left:625px;top:707px;width:104px;text-align:center;;padding-left:1px">05.2025</div>
<div class="c" style="left:799px;top:707px;width:66px;text-align:right;padding-right:5px;padding-right:5px"></div>
<div class="c" style="left:866px;top:707px;width:115px;text-align:left;padding-left:3px;padding-left:2px;letter-spacing:0.4px">Зарплата (в банк)</div>
<div class="c n" style="left:982px;top:707px;width:89px;text-align:right;padding-right:5px;color:#008000;padding-right:5px">-5.39</div>
<div class="c" style="left:1072px;top:707px;width:355px;text-align:left;padding-left:3px;padding-left:2px">бюджет 626</div>
<div style="left:4px;top:745px;width:1423px;height:1px;background:#a5a5a5"></div>
<div class="c" style="left:5px;top:727px;width:619px;text-align:left;padding-left:3px;color:#008000;padding-left:1.5px;letter-spacing:0.4px">630 - Начисления для персонифицированного учета (ПУЗ)</div>
<div class="c" style="left:625px;top:727px;width:104px;text-align:center;;padding-left:1px">05.2025</div>
<div class="c" style="left:799px;top:727px;width:66px;text-align:right;padding-right:5px;padding-right:5px"></div>
<div class="c" style="left:866px;top:727px;width:115px;text-align:left;padding-left:3px;padding-left:2px;letter-spacing:0.4px">Зарплата (в банк)</div>
<div class="c n" style="left:982px;top:727px;width:89px;text-align:right;padding-right:5px;color:#008000;padding-right:5px">-11.61</div>
<div class="c" style="left:1072px;top:727px;width:355px;text-align:left;padding-left:3px;padding-left:2px">бюджет</div>
<div style="left:4px;top:765px;width:1423px;height:1px;background:#a5a5a5"></div>
<div class="c" style="left:5px;top:747px;width:619px;text-align:left;padding-left:3px;color:#008000;padding-left:1.5px;letter-spacing:0.4px">630 - Начисления для персонифицированного учета (ПУЗ)</div>
<div class="c" style="left:625px;top:747px;width:104px;text-align:center;;padding-left:1px">06.2025</div>
<div class="c" style="left:799px;top:747px;width:66px;text-align:right;padding-right:5px;padding-right:5px"></div>
<div class="c" style="left:866px;top:747px;width:115px;text-align:left;padding-left:3px;padding-left:2px;letter-spacing:0.4px">Зарплата (в банк)</div>
<div class="c n" style="left:982px;top:747px;width:89px;text-align:right;padding-right:5px;color:#008000;padding-right:5px">-0.87</div>
<div class="c" style="left:1072px;top:747px;width:355px;text-align:left;padding-left:3px;padding-left:2px">бюджет</div>
<div style="left:4px;top:785px;width:1423px;height:1px;background:#a5a5a5"></div>
<div class="c" style="left:5px;top:767px;width:619px;text-align:left;padding-left:3px;color:#008000;padding-left:1.5px;letter-spacing:0.4px">632 - Начисления для профессионального пенсионного страхования 4.0%</div>
<div class="c" style="left:625px;top:767px;width:104px;text-align:center;;padding-left:1px">05.2025</div>
<div class="c" style="left:799px;top:767px;width:66px;text-align:right;padding-right:5px;padding-right:5px"></div>
<div class="c" style="left:866px;top:767px;width:115px;text-align:left;padding-left:3px;padding-left:2px;letter-spacing:0.4px">Зарплата (в банк)</div>
<div class="c n" style="left:982px;top:767px;width:89px;text-align:right;padding-right:5px;color:#008000;padding-right:5px">-0.62</div>
<div class="c" style="left:1072px;top:767px;width:355px;text-align:left;padding-left:3px;padding-left:2px">бюджет 626</div>
<div style="left:4px;top:805px;width:1423px;height:1px;background:#a5a5a5"></div>
<div class="c" style="left:5px;top:787px;width:619px;text-align:left;padding-left:3px;color:#008000;padding-left:1.5px;letter-spacing:0.4px">632 - Начисления для профессионального пенсионного страхования 4.0%</div>
<div class="c" style="left:625px;top:787px;width:104px;text-align:center;;padding-left:1px">05.2025</div>
<div class="c" style="left:799px;top:787px;width:66px;text-align:right;padding-right:5px;padding-right:5px"></div>
<div class="c" style="left:866px;top:787px;width:115px;text-align:left;padding-left:3px;padding-left:2px;letter-spacing:0.4px">Зарплата (в банк)</div>
<div class="c n" style="left:982px;top:787px;width:89px;text-align:right;padding-right:5px;color:#008000;padding-right:5px">-1.32</div>
<div class="c" style="left:1072px;top:787px;width:355px;text-align:left;padding-left:3px;padding-left:2px">бюджет</div>
<div style="left:4px;top:825px;width:1423px;height:1px;background:#a5a5a5"></div>
<div class="c" style="left:5px;top:807px;width:619px;text-align:left;padding-left:3px;color:#008000;padding-left:1.5px;letter-spacing:0.4px">632 - Начисления для профессионального пенсионного страхования 4.0%</div>
<div class="c" style="left:625px;top:807px;width:104px;text-align:center;;padding-left:1px">06.2025</div>
<div class="c" style="left:799px;top:807px;width:66px;text-align:right;padding-right:5px;padding-right:5px"></div>
<div class="c" style="left:866px;top:807px;width:115px;text-align:left;padding-left:3px;padding-left:2px;letter-spacing:0.4px">Зарплата (в банк)</div>
<div class="c n" style="left:982px;top:807px;width:89px;text-align:right;padding-right:5px;color:#008000;padding-right:5px">-78.02</div>
<div class="c" style="left:1072px;top:807px;width:355px;text-align:left;padding-left:3px;padding-left:2px">бюджет</div>
<div style="left:4px;top:845px;width:1423px;height:1px;background:#a5a5a5"></div>
<div class="c" style="left:5px;top:827px;width:619px;text-align:left;padding-left:3px;color:#008000;padding-left:1.5px;letter-spacing:0.4px">632 - Начисления для профессионального пенсионного страхования 4.0%</div>
<div class="c" style="left:625px;top:827px;width:104px;text-align:center;;padding-left:1px">06.2025</div>
<div class="c" style="left:799px;top:827px;width:66px;text-align:right;padding-right:5px;padding-right:5px"></div>
<div class="c" style="left:866px;top:827px;width:115px;text-align:left;padding-left:3px;padding-left:2px;letter-spacing:0.4px">Зарплата (в банк)</div>
<div class="c n" style="left:982px;top:827px;width:89px;text-align:right;padding-right:5px;color:#008000;padding-right:5px">-1.33</div>
<div class="c" style="left:1072px;top:827px;width:355px;text-align:left;padding-left:3px;padding-left:2px">Медицинские услуги</div>
<div style="left:4px;top:865px;width:1423px;height:1px;background:#a5a5a5"></div>
<div class="c" style="left:5px;top:847px;width:619px;text-align:left;padding-left:3px;color:#008000;padding-left:1.5px;letter-spacing:0.4px">636 - Фонд заработной платы для налогов</div>
<div class="c" style="left:625px;top:847px;width:104px;text-align:center;;padding-left:1px">05.2025</div>
<div class="c" style="left:799px;top:847px;width:66px;text-align:right;padding-right:5px;padding-right:5px"></div>
<div class="c" style="left:866px;top:847px;width:115px;text-align:left;padding-left:3px;padding-left:2px;letter-spacing:0.4px">Зарплата (в банк)</div>
<div class="c n" style="left:982px;top:847px;width:89px;text-align:right;padding-right:5px;color:#008000;padding-right:5px">-15.38</div>
<div class="c" style="left:1072px;top:847px;width:355px;text-align:left;padding-left:3px;padding-left:2px">бюджет 626</div>
<div style="left:4px;top:885px;width:1423px;height:1px;background:#a5a5a5"></div>
<div class="c" style="left:5px;top:867px;width:619px;text-align:left;padding-left:3px;color:#008000;padding-left:1.5px;letter-spacing:0.4px">636 - Фонд заработной платы для налогов</div>
<div class="c" style="left:625px;top:867px;width:104px;text-align:center;;padding-left:1px">05.2025</div>
<div class="c" style="left:799px;top:867px;width:66px;text-align:right;padding-right:5px;padding-right:5px"></div>
<div class="c" style="left:866px;top:867px;width:115px;text-align:left;padding-left:3px;padding-left:2px;letter-spacing:0.4px">Зарплата (в банк)</div>
<div class="c n" style="left:982px;top:867px;width:89px;text-align:right;padding-right:5px;color:#008000;padding-right:5px">-33.21</div>
<div class="c" style="left:1072px;top:867px;width:355px;text-align:left;padding-left:3px;padding-left:2px">бюджет</div>
<div style="left:4px;top:905px;width:1423px;height:1px;background:#a5a5a5"></div>
<div class="c" style="left:5px;top:887px;width:619px;text-align:left;padding-left:3px;color:#008000;padding-left:1.5px;letter-spacing:0.4px">636 - Фонд заработной платы для налогов</div>
<div class="c" style="left:625px;top:887px;width:104px;text-align:center;;padding-left:1px">06.2025</div>
<div class="c" style="left:799px;top:887px;width:66px;text-align:right;padding-right:5px;padding-right:5px"></div>
<div class="c" style="left:866px;top:887px;width:115px;text-align:left;padding-left:3px;padding-left:2px;letter-spacing:0.4px">Зарплата (в банк)</div>
<div class="c n" style="left:982px;top:887px;width:89px;text-align:right;padding-right:5px;color:#008000;padding-right:5px">-2.47</div>
<div class="c" style="left:1072px;top:887px;width:355px;text-align:left;padding-left:3px;padding-left:2px">бюджет</div>
<div style="left:624px;top:246px;width:1px;height:660px;background:#a5a5a5"></div>
<div style="left:729px;top:246px;width:1px;height:660px;background:#a5a5a5"></div>
<div style="left:798px;top:246px;width:1px;height:660px;background:#a5a5a5"></div>
<div style="left:865px;top:246px;width:1px;height:660px;background:#a5a5a5"></div>
<div style="left:981px;top:246px;width:1px;height:660px;background:#a5a5a5"></div>
<div style="left:1071px;top:246px;width:1px;height:660px;background:#a5a5a5"></div>
<div style="left:5px;top:246px;width:619px;height:20px;background:#2a2890"></div>
<div style="left:5px;top:246px;width:619px;height:1px;background:repeating-linear-gradient(90deg,#f4f430 0 1px,#10906a 1px 2px)"></div>
<div style="left:5px;top:265px;width:619px;height:1px;background:repeating-linear-gradient(90deg,#f4f430 0 1px,#10906a 1px 2px)"></div>
<div style="left:623px;top:246px;width:1px;height:20px;background:repeating-linear-gradient(180deg,#f4f430 0 1px,#10906a 1px 2px)"></div>
<div class="c" style="left:5px;top:247px;width:619px;text-align:left;padding-left:3px;color:#e0e0ea;padding-left:1.5px;letter-spacing:0.4px">001 - Оклад</div>
<div style="left:1427px;top:208px;width:1px;height:698px;background:#a5a5a5"></div>
<div style="left:4px;top:917px;width:1443px;height:1px;background:#a7b2cb"></div>
<div style="left:1428px;top:208px;width:16px;height:709px;background:linear-gradient(90deg,#dfe6f6,#f6f8fd 45%,#fbfcff 60%,#dde5f5)"></div>
<div class="sb" style="left:1428px;top:209px;width:16px;height:16px;"></div><svg style="left:1428px;top:209px" width="16" height="16"><path d="M4 9.5 L8 5.5 L12 9.5" stroke="#1e3558" stroke-width="2.2" fill="none"/></svg><div style="left:1429px;top:224px;width:14px;height:1px;background:#8a9ac4"></div>
<div style="left:1428px;top:555px;width:16px;height:17px;background:linear-gradient(90deg,#fafbfe,#e8edf8 60%,#d2dbef);border:1px solid #8e9ec6;border-radius:2px;box-shadow:inset 0 0 0 1px #fff"></div><svg style="left:1428px;top:555px" width="16" height="17"><path d="M5 5.5 H11 M5 7.5 H11 M5 9.5 H11 M5 11.5 H11" stroke="#8a94b0" stroke-width="1"/></svg>
<div class="sb" style="left:1428px;top:901px;width:16px;height:16px;"></div><svg style="left:1428px;top:901px" width="16" height="16"><path d="M4 6.5 L8 10.5 L12 6.5" stroke="#1e3558" stroke-width="2.2" fill="none"/></svg><div style="left:1429px;top:916px;width:14px;height:1px;background:#8a9ac4"></div>
<div style="left:1444px;top:107px;width:2px;height:810px;background:#cdd6ee"></div>
<div style="left:14px;top:143px;width:1392px;height:24px;border:3px solid #ff0000;border-radius:3px"></div>
<div style="left:2px;top:766px;width:1425px;height:82px;border:3px solid #ff0000;border-radius:3px"></div>
<div class="nav" style="left:7px;top:923px;width:24px;height:34px;"></div>
<div class="nav" style="left:31px;top:923px;width:24px;height:34px;"></div>
<div class="nav" style="left:55px;top:923px;width:24px;height:34px;"></div>
<div class="nav" style="left:79px;top:923px;width:24px;height:34px;"></div>
<svg style="left:7px;top:923px" width="24" height="34"><rect x="8" y="14" width="1.6" height="7" fill="#000"/><path d="M18 14 L10 17.5 L18 21 Z" fill="#000"/></svg>
<svg style="left:31px;top:923px" width="24" height="34"><path d="M17 14 L9 17.5 L17 21 Z" fill="#000"/></svg>
<svg style="left:55px;top:923px" width="24" height="34"><path d="M8 14 L16 17.5 L8 21 Z" fill="#000"/></svg>
<svg style="left:79px;top:923px" width="24" height="34"><path d="M7 14 L15 17.5 L7 21 Z" fill="#000"/><rect x="16" y="14" width="1.6" height="7" fill="#000"/></svg>
<div style="left:1408px;top:923px;width:34px;height:34px;background:linear-gradient(#ffffff,#f0f3f9 50%,#dde4f1);border:1px solid #5c6672;border-radius:3px"></div>
<svg style="left:1406px;top:921px" width="38" height="38"><defs><linearGradient id="dg" x1="0" x2="1"><stop offset="0" stop-color="#c86a20"/><stop offset="0.45" stop-color="#f0a050"/><stop offset="1" stop-color="#b85e18"/></linearGradient><linearGradient id="ig" x1="0" x2="1"><stop offset="0" stop-color="#b8b8b8"/><stop offset="1" stop-color="#f6f6f6"/></linearGradient><linearGradient id="ag" x1="0" y1="0" x2="0" y2="1"><stop offset="0" stop-color="#28b028"/><stop offset="0.5" stop-color="#58cc58"/><stop offset="1" stop-color="#30b030"/></linearGradient></defs><rect x="7" y="8" width="16.2" height="19.5" fill="#dc8232"/><rect x="9" y="9.3" width="13" height="18.2" fill="url(#ig)"/><path d="M7 8 L14 12.5 L14 31 L7 27 Z" fill="url(#dg)"/><rect x="7" y="12" width="0.9" height="1.5" fill="#6a7a90"/><rect x="7" y="21" width="0.9" height="1.5" fill="#6a7a90"/><rect x="11.5" y="20.5" width="1.3" height="1.3" fill="#8a6a50"/><path d="M17.5 18.3 L24.5 12.2 L24.5 15.3 L31 15.3 L31 21.6 L24.5 21.6 L24.5 23.8 Z" fill="url(#ag)" stroke="#009000" stroke-width="1.1" stroke-linejoin="round"/><rect x="23" y="23.5" width="8" height="7" rx="1.2" fill="#4a4a4a"/><rect x="24.2" y="27" width="5.6" height="2.8" fill="#fafafa"/><rect x="25" y="24.2" width="3.6" height="1.8" fill="#e0e0e0"/></svg>
</body></html>
